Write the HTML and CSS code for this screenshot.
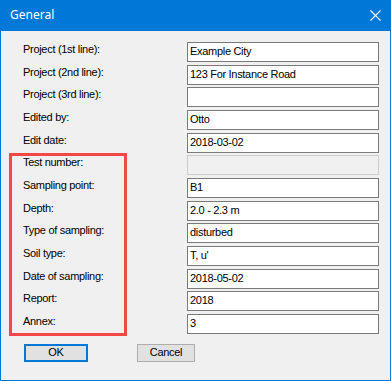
FILE: index.html
```html
<!DOCTYPE html>
<html>
<head>
<meta charset="utf-8">
<link rel="stylesheet" href="styles.css">
</head>
<body>
<div class="window">
  <div class="titlebar">
    <span class="title">General</span>
    <svg class="close" width="11" height="11" viewBox="0 0 11 11"><path d="M0.5 0.5 L10.5 10.5 M10.5 0.5 L0.5 10.5" stroke="#fff" stroke-width="1.1" fill="none"/></svg>
  </div>
  <div class="content">
    <div class="form">
      <div class="label">Project (1st line):</div><div class="field">Example City</div>
      <div class="label">Project (2nd line):</div><div class="field">123 For Instance Road</div>
      <div class="label">Project (3rd line):</div><div class="field"></div>
      <div class="label">Edited by:</div><div class="field">Otto</div>
      <div class="label">Edit date:</div><div class="field">2018-03-02</div>
      <div class="label">Test number:</div><div class="field disabled"></div>
      <div class="label">Sampling point:</div><div class="field">B1</div>
      <div class="label">Depth:</div><div class="field">2.0 - 2.3 m</div>
      <div class="label">Type of sampling:</div><div class="field">disturbed</div>
      <div class="label">Soil type:</div><div class="field">T, u'</div>
      <div class="label">Date of sampling:</div><div class="field">2018-05-02</div>
      <div class="label">Report:</div><div class="field">2018</div>
      <div class="label">Annex:</div><div class="field">3</div>
    </div>
    <div class="buttons">
      <div class="btn btn-default">OK</div>
      <div class="btn btn-cancel">Cancel</div>
    </div>
    <div class="highlight"></div>
  </div>
</div>
</body>
</html>
```
FILE: styles.css
```css
html, body {
  margin: 0;
  padding: 0;
  background: #ffffff;
}
.window {
  width: 391px;
  height: 381px;
  box-sizing: border-box;
  border: 1px solid #0078d7;
  border-top: none;
  background: #f0f0f0;
  font-family: "Liberation Sans", Arial, sans-serif;
  font-size: 11px;
  letter-spacing: -0.3px;
  color: #000;
  position: relative;
}
.titlebar {
  height: 31px;
  margin: 0 -1px;
  background: #0078d7;
  display: flex;
  align-items: center;
  justify-content: space-between;
  padding: 0 10px 0 10px;
  letter-spacing: 0;
}
.title {
  font-family: "Noto Sans", "Open Sans", sans-serif;
  font-size: 12px;
  color: #ffffff;
  line-height: 16px;
  margin-top: -1px;
}
.close {
  display: block;
}
.content {
  position: relative;
  padding: 11px 11px 0 22px;
}
.form {
  display: grid;
  grid-template-columns: 164px 192px;
  grid-auto-rows: 20px;
  row-gap: 2.67px;
}
.label {
  padding-top: 1px;
  line-height: 13px;
  white-space: nowrap;
}
.field {
  box-sizing: border-box;
  height: 20px;
  border: 1px solid #7a7a7a;
  background: #ffffff;
  padding: 0 2px 2px 2px;
  line-height: 16px;
  white-space: nowrap;
  overflow: hidden;
}
.field.disabled {
  background: #f0f0f0;
  border-color: #cccccc;
}
.buttons {
  display: flex;
  padding-top: 10px;
  padding-left: 1px;
  gap: 49px;
}
.btn {
  box-sizing: border-box;
  height: 18px;
  background: #e1e1e1;
  text-align: center;
  line-height: 15px;
}
.btn-default {
  width: 64px;
  border: 2px solid #0078d7;
  line-height: 13px;
}
.btn-cancel {
  width: 58px;
  border: 1px solid #adadad;
}
.highlight {
  position: absolute;
  left: 8px;
  top: 122px;
  width: 118px;
  height: 183px;
  box-sizing: border-box;
  border: 3px solid #f44747;
}
```
